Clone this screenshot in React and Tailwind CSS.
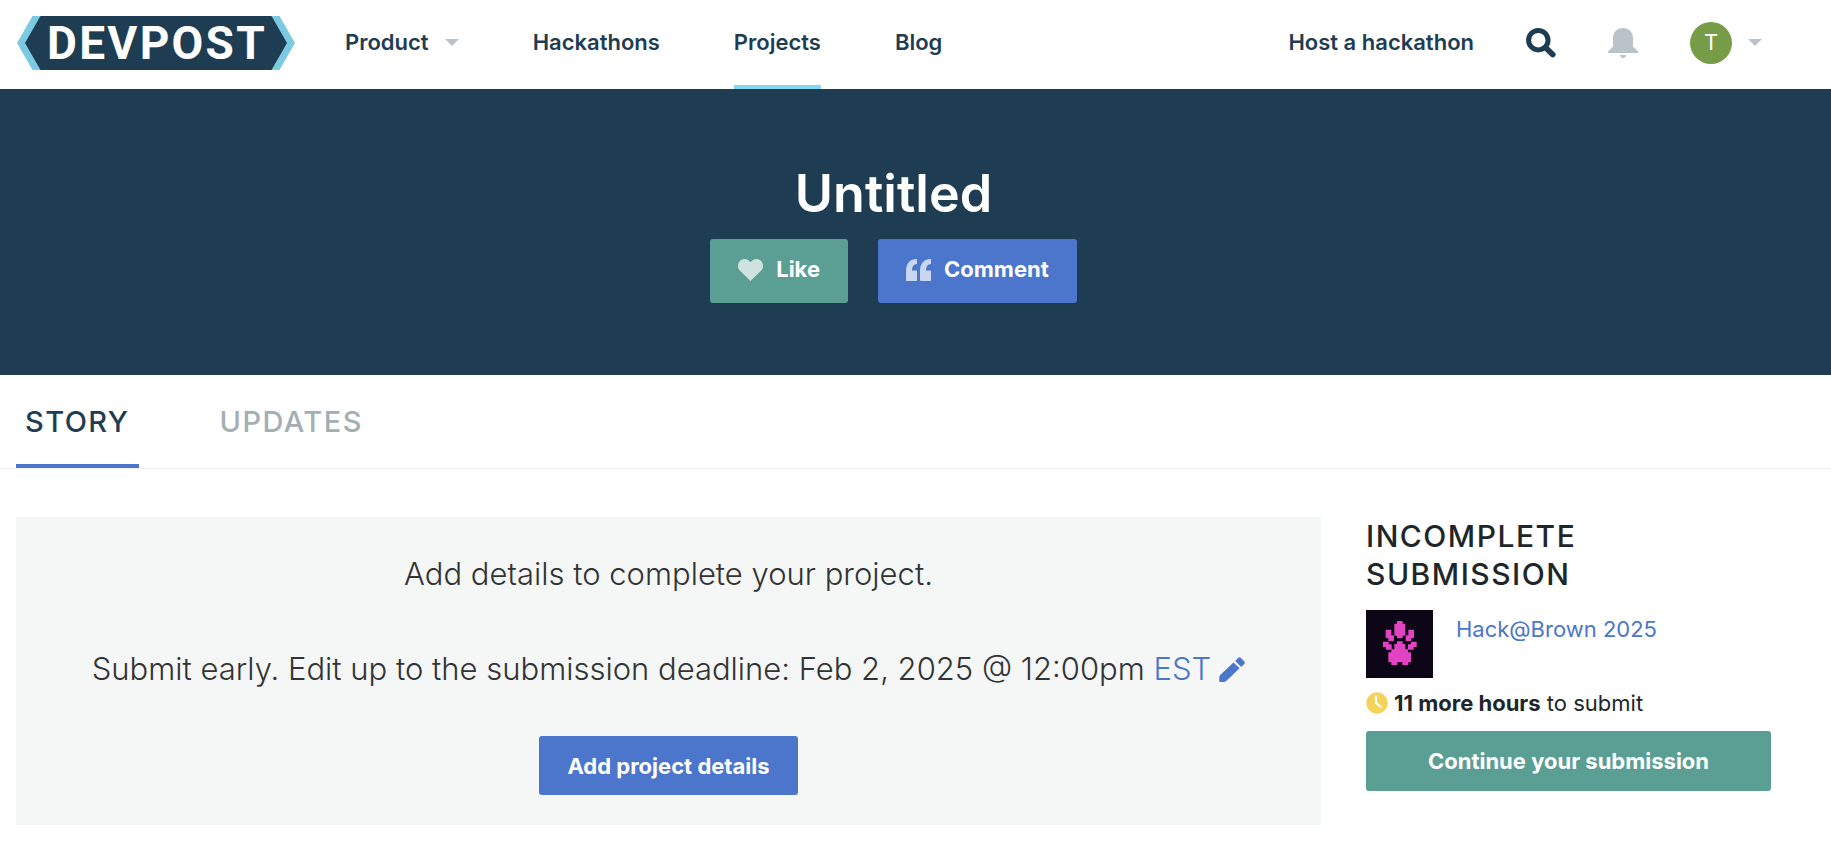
import React from 'react';

function Logo() {
  return (
    <svg width="278" height="54" viewBox="0 0 278 54" role="img" aria-label="Devpost">
      <polygon points="0,27 15.500,0 262.500,0 278,27 262.500,54 15.500,54" fill="#7bcae2" />
      <polygon points="8,27 23.500,0 254.500,0 270,27 254.500,54 23.500,54" fill="#1f3d52" />
      <text
        x="140"
        y="43"
        textAnchor="middle"
        fill="#fff"
        className="font-['Roboto',sans-serif] text-[46px] font-bold tracking-wider"
      >
        DEVPOST
      </text>
    </svg>
  );
}

function Caret() {
  return (
    <svg width="14" height="7" viewBox="0 0 14 7" fill="#b9c3c9" aria-hidden="true">
      <path d="M0 0h14L7 7z" />
    </svg>
  );
}

function SearchIcon() {
  return (
    <svg width="30" height="30" viewBox="0 0 30 30" fill="none" stroke="#1f3d52" aria-hidden="true">
      <circle cx="12.300" cy="12.200" r="9.700" strokeWidth="5" />
      <path d="M19.500 19.500l7.200 7" strokeWidth="5.800" strokeLinecap="round" />
    </svg>
  );
}

function BellIcon() {
  return (
    <svg width="30" height="30" viewBox="0 0 30 30" fill="#b9c3c9" aria-hidden="true">
      <path d="M15 0C9.200 0 5 4.300 5 10v8.500L0 23.600V25h30v-1.400l-5-5.100V10C25 4.300 20.800 0 15 0z" />
      <path d="M12 27h6c0 1.700-1.300 3-3 3s-3-1.300-3-3z" />
    </svg>
  );
}

function HeartIcon() {
  return (
    <svg width="25" height="22" viewBox="0 0 25 22" fill="#fff" fillOpacity="0.7" aria-hidden="true">
      <path d="M12.500 22L2 11.700C.7 10.400 0 8.900 0 6.900 0 3 2.900 0 6.700 0c2.500 0 4.500 1.300 5.800 3.300C13.800 1.300 15.800 0 18.300 0 22.100 0 25 3 25 6.900c0 2-.7 3.500-2 4.800z" />
    </svg>
  );
}

function QuoteIcon() {
  return (
    <svg width="25" height="22" viewBox="0 0 25 22" fill="#fff" fillOpacity="0.7" aria-hidden="true">
      <path d="M11 0v5C7.800 5.200 6 7.500 6 11.500h4c.7 0 1 .4 1 1V21c0 .6-.4 1-1 1H1c-.6 0-1-.4-1-1v-9C0 4.700 3.800 0 11 0z" />
      <path d="M25 0v5c-3.200.2-5 2.500-5 6.500h4c.7 0 1 .4 1 1V21c0 .6-.4 1-1 1h-9c-.6 0-1-.4-1-1v-9C14 4.700 17.800 0 25 0z" />
    </svg>
  );
}

function PencilIcon() {
  return (
    <svg width="26" height="25" viewBox="0 0 26 25" fill="currentColor" aria-hidden="true">
      <path d="M14.500 5.500L20.600 11.300 7.500 23.700Q6.200 25 4.500 25H0.300V20.500Q0.300 19 1.500 17.800z" />
      <path d="M16.200 3.900L19 1.100C20 .1 21 .1 22 1L25 4c1 1 1.100 2.200.2 3.100L22.300 9.900z" />
    </svg>
  );
}

function ClockIcon() {
  return (
    <svg width="22" height="22" viewBox="0 0 22 22" fill="none" aria-hidden="true">
      <circle cx="11" cy="11" r="10.700" fill="#f3d35a" />
      <path d="M10 4.500v6.500l5 4" stroke="#fff" strokeWidth="2.200" strokeLinecap="round" strokeLinejoin="round" />
    </svg>
  );
}

function PawThumbnail() {
  return (
    <svg width="67" height="68" viewBox="0 0 201 204" role="img" aria-label="Hack@Brown 2025 logo">
      <path d="M0 0h201v204H0z" fill="#0c0617" />
      <g fill="#e243c2">
        <path d="M93 33h17v8h8v36h-8v8H93v-8h-8V41h8z" />
        <path d="M59 59h17v17h8v17H67v-9h-8z" />
        <path d="M144 59h-17v17h-8v17h17v-9h8z" />
        <path d="M51 95h17v8h9v16H60v-8h-9z" />
        <path d="M152 95h-17v8h-9v16h17v-8h9z" />
        <path d="M93 94h17v8h8v16h8v9h9v30h-8v8h-18v-8H94v8H76v-8h-9v-30h9v-9h9v-16h8z" />
      </g>
    </svg>
  );
}

const navLink = 'flex h-full items-center gap-4 border-b-4';

export default function App() {
  return (
    <div className="min-h-screen bg-white font-['Inter',sans-serif] text-[#333]">
      <header className="flex h-[89px] items-center justify-between pl-[17px] pr-[69px] text-[22px] font-semibold text-[#1f3d52]">
        <div className="flex h-full items-center gap-[50px]">
          <a href="#home" className="flex h-full items-center border-b-4 border-transparent">
            <Logo />
          </a>
          <nav className="flex h-full items-center gap-[74px]" aria-label="Main">
            <a href="#product" className={`${navLink} border-transparent`}>
              Product
              <Caret />
            </a>
            <a href="#hackathons" className={`${navLink} border-transparent`}>Hackathons</a>
            <a href="#projects" className={`${navLink} border-[#87d7ee]`} aria-current="page">Projects</a>
            <a href="#blog" className={`${navLink} border-transparent`}>Blog</a>
          </nav>
        </div>
        <div className="flex h-full items-center gap-[52px] border-b-4 border-transparent">
          <a href="#host">Host a hackathon</a>
          <button type="button" aria-label="Search"><SearchIcon /></button>
          <button type="button" aria-label="Notifications"><BellIcon /></button>
          <button type="button" aria-label="Account" className="flex items-center gap-4">
            <span className="flex size-[42px] items-center justify-center rounded-full bg-[#769c47] font-normal text-white">
              T
            </span>
            <Caret />
          </button>
        </div>
      </header>

      <section className="flex flex-col items-center bg-[#1f3d52] pt-[75px] pr-[60px] pb-[72px] pl-4 text-white">
        <h1 className="text-[52px] leading-[60px] font-semibold">Untitled</h1>
        <div className="mt-[15px] flex gap-[30px] text-[22px] font-bold">
          <button type="button" className="flex h-16 items-center gap-[13px] rounded-[3px] bg-[#5b9e94] px-7 pb-[3px]">
            <HeartIcon />
            Like
          </button>
          <button type="button" className="flex h-16 items-center gap-[13px] rounded-[3px] bg-[#4b76cb] px-7 pb-[3px]">
            <QuoteIcon />
            Comment
          </button>
        </div>
      </section>

      <nav
        className="flex h-[94px] gap-[72px] border-b border-[#eceeef] pl-4 text-[29px] font-medium tracking-wider"
        aria-label="Project"
      >
        <a href="#story" aria-current="page" className="flex items-center border-b-4 border-[#4b76cb] px-[9px] pt-1 text-[#1f3d52]">
          STORY
        </a>
        <a href="#updates" className="flex items-center border-b-4 border-transparent px-[9px] pt-1 text-[#a3afb3]">
          UPDATES
        </a>
      </nav>

      <main className="flex items-start gap-[45px] pt-12 pr-[60px] pl-4">
        <section className="flex flex-1 flex-col items-center bg-[#f4f7f6] pt-[38px] pb-[30px] text-[31px] leading-[38px] font-light">
          <p>Add details to complete your project.</p>
          <p className="mt-[57px] flex items-center gap-2">
            <span>
              Submit early. Edit up to the submission deadline: Feb 2, 2025 @ 12:00pm{' '}
              <a href="#timezone" className="text-[#4b76cb]">EST</a>
            </span>
            <a href="#edit-timezone" aria-label="Change time zone" className="text-[#4b76cb]"><PencilIcon /></a>
          </p>
          <button type="button" className="mt-12 flex h-[59px] items-center rounded-[3px] bg-[#4b76cb] px-7 text-[22px] font-bold text-white">
            Add project details
          </button>
        </section>

        <aside className="w-[405px] text-[22px] leading-[30px] text-[#1d2629]">
          <h2 className="max-w-xs text-[30px] leading-[38px] font-medium tracking-wider">INCOMPLETE SUBMISSION</h2>
          <div className="mt-[17px] flex items-start gap-[23px]">
            <PawThumbnail />
            <a href="#hackathon" className="pt-1 text-[#4b76cb]">Hack@Brown 2025</a>
          </div>
          <p className="mt-[10px] flex items-center gap-[6px]">
            <ClockIcon />
            <span><strong className="font-bold">11 more hours</strong> to submit</span>
          </p>
          <button type="button" className="mt-[13px] flex h-[60px] w-full items-center justify-center rounded-[3px] bg-[#5b9e94] font-bold text-white">
            Continue your submission
          </button>
        </aside>
      </main>
    </div>
  );
}
